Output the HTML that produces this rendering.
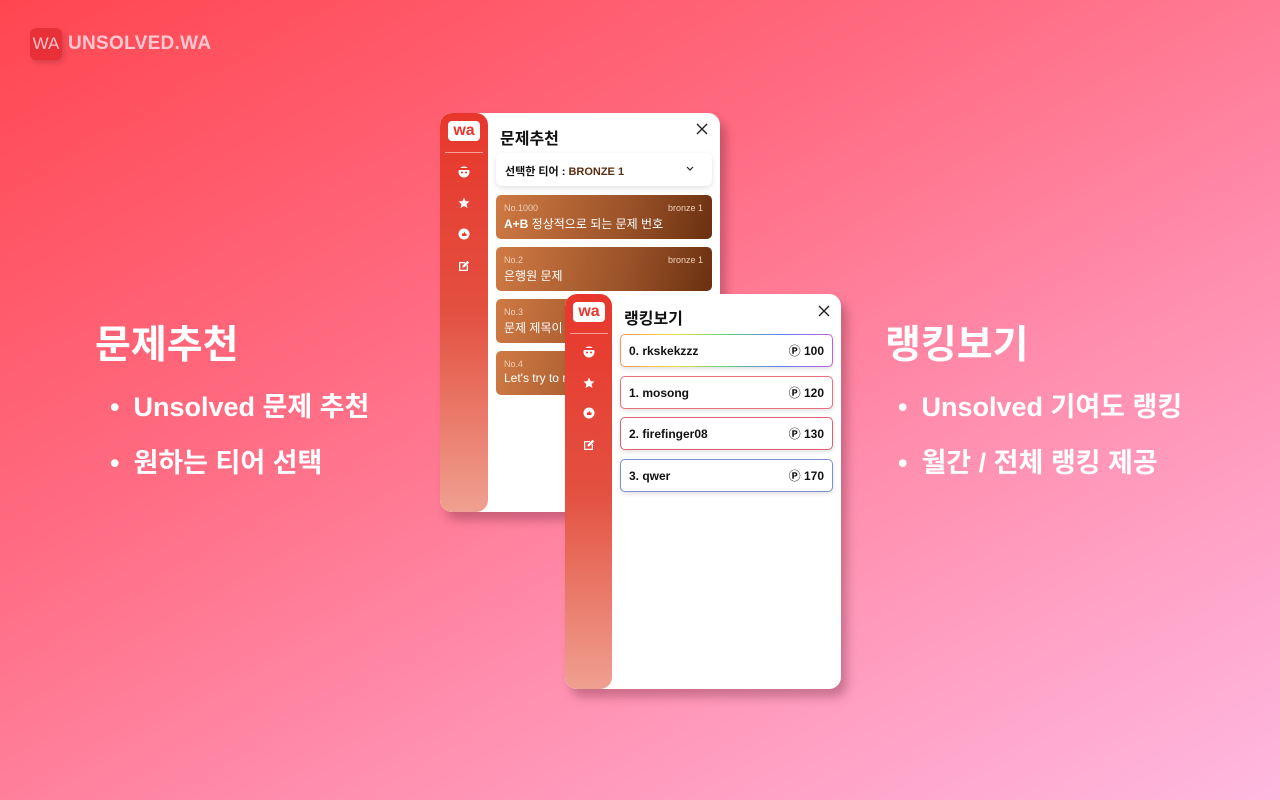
<!DOCTYPE html><html><head><meta charset="utf-8"><style>
*{margin:0;padding:0;box-sizing:border-box}
body{width:1280px;height:800px;overflow:hidden;position:relative;font-family:"Liberation Sans","Noto Sans CJK KR",sans-serif;background:linear-gradient(150deg,#ff4650 0%,#ff6a80 35%,#ff90b0 65%,#ffb8e0 100%)}
.logo{position:absolute;left:30px;top:28px;display:flex;align-items:center;gap:6px}
.logo .b{width:32px;height:32px;border-radius:6px;background:#e83038;color:#ffc0c8;font-size:17px;display:flex;align-items:center;justify-content:center;box-shadow:2px 3px 6px rgba(0,0,0,.15)}
.logo .t{color:#ffc8d0;font-weight:bold;font-size:19px;letter-spacing:.3px}
.h{position:absolute;color:#fff;font-weight:bold;font-size:39px}
.li{position:absolute;color:#fff;font-weight:bold;font-size:27px}
.li:before{content:"•";margin-right:14px}
.panel{position:absolute;background:#fff;border-radius:12px;box-shadow:6px 8px 10px rgba(80,20,40,.3);overflow:hidden}
.side{position:absolute;left:0;top:0;bottom:0;width:48px;border-radius:12px;background:linear-gradient(180deg,#e8372c 0%,#e35040 50%,#f0a090 100%)}
.wa{position:absolute;left:8px;top:8px;width:32px;height:20px;background:#fff;border-radius:4px;color:#e8372c;font-weight:bold;font-size:16px;text-align:center;line-height:19px}
.line{position:absolute;left:5px;top:39px;width:38px;height:1px;background:#f4a098}
.ic{position:absolute;left:18px;width:12px;height:12px}
.title{position:absolute;font-weight:bold;font-size:16px;color:#111}
.x{position:absolute;width:12px;height:12px}
.card{position:absolute;left:56px;width:216px;height:44px;border-radius:5px;background:linear-gradient(105deg,#d07a44,#9a5228 60%,#6a3010);color:#fff}
.card .n{position:absolute;left:8px;top:8px;font-size:9px;color:#f0d0b8}
.card .r{position:absolute;right:9px;top:8px;font-size:9px;color:#f0d0b8}
.card .m{position:absolute;left:8px;top:20px;font-size:12px}
.row{position:absolute;left:55px;width:213px;height:33px;border-radius:5px;border:1px solid #e87080;font-weight:bold;font-size:12px;color:#111;box-shadow:0 2px 5px rgba(0,0,0,.12);background:#fff;display:flex;align-items:center;justify-content:space-between;padding:0 8px}
</style></head><body>
<div class="logo"><div class="b">WA</div><div class="t">UNSOLVED.WA</div></div>
<div class="h" style="left:95px;top:314px">문제추천</div>
<div class="li" style="left:110px;top:385px">Unsolved 문제 추천</div>
<div class="li" style="left:110px;top:441px">원하는 티어 선택</div>
<div class="h" style="left:885px;top:314px">랭킹보기</div>
<div class="li" style="left:898px;top:385px">Unsolved 기여도 랭킹</div>
<div class="li" style="left:898px;top:441px">월간 / 전체 랭킹 제공</div>

<div class="panel" style="left:440px;top:113px;width:280px;height:399px">
<div class="side"><div class="wa">wa</div><div class="line"></div>
<svg class="ic" style="top:53px" viewBox="0 0 12 12"><circle cx="6" cy="6" r="5.5" fill="#fff"/><circle cx="4" cy="6.5" r="1" fill="#e8372c"/><circle cx="8" cy="6.5" r="1" fill="#e8372c"/><rect x="1" y="2" width="10" height="2" fill="#e8372c"/></svg>
<svg class="ic" style="top:84px" viewBox="0 0 12 12"><path d="M6 .5l1.6 3.6 3.9.4-2.9 2.6.9 3.9L6 9 2.5 11l.9-3.9L.5 4.5l3.9-.4z" fill="#fff"/></svg>
<svg class="ic" style="top:115px" viewBox="0 0 12 12"><circle cx="6" cy="6" r="5.5" fill="#fff"/><path d="M4 8V5.5h1.5L7 3.5v2h1.5V8z" fill="#e8372c"/></svg>
<svg class="ic" style="top:147px" viewBox="0 0 12 12"><path d="M1 2h6v1.3H2.3v6.4h6.4V5H10v6H1z" fill="#fff"/><path d="M9.5 .8l1.7 1.7-5 5H4.5V5.8z" fill="#fff"/></svg>
</div>
<div class="title" style="left:60px;top:12px">문제추천</div>
<svg class="x" style="left:256px;top:10px" viewBox="0 0 12 12"><path d="M1 1L11 11M11 1L1 11" stroke="#222" stroke-width="1.4"/></svg>
<div style="position:absolute;left:56px;top:40px;width:216px;height:33px;border-radius:6px;box-shadow:0 2px 6px rgba(0,0,0,.12);font-size:11px;font-weight:bold;padding:10px 9px;color:#111">선택한 티어 : <span style="color:#5a2e10">BRONZE 1</span><svg style="position:absolute;right:18px;top:13px" width="8" height="5" viewBox="0 0 8 5"><path d="M1 1l3 3 3-3" stroke="#222" fill="none" stroke-width="1.2"/></svg></div>
<div class="card" style="top:82px"><div class="n">No.1000</div><div class="r">bronze 1</div><div class="m"><b>A+B</b> 정상적으로 되는 문제 번호</div></div>
<div class="card" style="top:134px"><div class="n">No.2</div><div class="r">bronze 1</div><div class="m">은행원 문제</div></div>
<div class="card" style="top:186px"><div class="n">No.3</div><div class="m">문제 제목이 길</div></div>
<div class="card" style="top:238px"><div class="n">No.4</div><div class="m">Let's try to m</div></div>
</div>

<div class="panel" style="left:565px;top:294px;width:276px;height:395px">
<div class="side" style="width:47px"><div class="wa">wa</div><div class="line"></div>
<svg class="ic" style="top:52px" viewBox="0 0 12 12"><circle cx="6" cy="6" r="5.5" fill="#fff"/><circle cx="4" cy="6.5" r="1" fill="#e8372c"/><circle cx="8" cy="6.5" r="1" fill="#e8372c"/><rect x="1" y="2" width="10" height="2" fill="#e8372c"/></svg>
<svg class="ic" style="top:83px" viewBox="0 0 12 12"><path d="M6 .5l1.6 3.6 3.9.4-2.9 2.6.9 3.9L6 9 2.5 11l.9-3.9L.5 4.5l3.9-.4z" fill="#fff"/></svg>
<svg class="ic" style="top:113px" viewBox="0 0 12 12"><circle cx="6" cy="6" r="5.5" fill="#fff"/><path d="M4 8V5.5h1.5L7 3.5v2h1.5V8z" fill="#e8372c"/></svg>
<svg class="ic" style="top:145px" viewBox="0 0 12 12"><path d="M1 2h6v1.3H2.3v6.4h6.4V5H10v6H1z" fill="#fff"/><path d="M9.5 .8l1.7 1.7-5 5H4.5V5.8z" fill="#fff"/></svg>
</div>
<div class="title" style="left:59px;top:11px">랭킹보기</div>
<svg class="x" style="left:253px;top:11px" viewBox="0 0 12 12"><path d="M1 1L11 11M11 1L1 11" stroke="#222" stroke-width="1.4"/></svg>
<div class="row" style="top:40px;border:1px solid transparent;background:linear-gradient(#fff,#fff) padding-box,linear-gradient(90deg,#ff9060,#f0e040,#60d080,#6080f0,#c060e0) border-box"><span>0. rkskekzzz</span><span>Ⓟ 100</span></div>
<div class="row" style="top:82px"><span>1. mosong</span><span>Ⓟ 120</span></div>
<div class="row" style="top:123px;border-color:#e06070"><span>2. firefinger08</span><span>Ⓟ 130</span></div>
<div class="row" style="top:165px;border-color:#7890d0"><span>3. qwer</span><span>Ⓟ 170</span></div>
</div>
</body></html>
